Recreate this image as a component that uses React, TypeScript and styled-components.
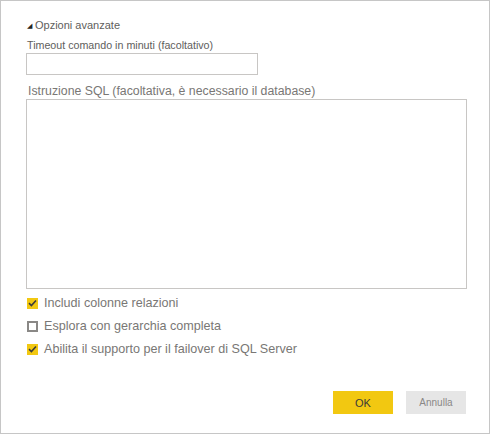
import styled, { createGlobalStyle } from 'styled-components';

const GlobalStyle = createGlobalStyle`
	html, body {
		margin: 0;
		padding: 0;
		background: #ffffff;
	}
	body {
		font-family: 'Liberation Sans', Arial, sans-serif;
	}
`;

type CheckOption = {
	label: string;
	checked: boolean;
};

const options: CheckOption[] = [
	{ label: 'Includi colonne relazioni', checked: true },
	{ label: 'Esplora con gerarchia completa', checked: false },
	{ label: 'Abilita il supporto per il failover di SQL Server', checked: true },
];

export default function App() {
	return (
		<>
			<GlobalStyle />
			<Dialog>
				<Section>
					<SectionHeader>
						<Caret>◢</Caret>
						Opzioni avanzate
					</SectionHeader>
					<FieldLabel>Timeout comando in minuti (facoltativo)</FieldLabel>
					<TextInput type='text' />
					<AreaLabel>
						Istruzione SQL (facoltativa, è necessario il database)
					</AreaLabel>
					<QueryArea />
				</Section>

				<CheckList>
					{options.map((option) => (
						<CheckRow key={option.label}>
							<Box $checked={option.checked}>
								{option.checked && (
									<svg width='9' height='8' viewBox='0 0 9 8'>
										<path
											d='M1 4.2 L3.4 6.5 L8 1.5'
											fill='none'
											stroke='#3b3a39'
											strokeWidth='1.6'
										/>
									</svg>
								)}
							</Box>
							{option.label}
						</CheckRow>
					))}
				</CheckList>

				<Footer>
					<Button $primary>OK</Button>
					<Button>Annulla</Button>
				</Footer>
			</Dialog>
		</>
	);
}

const Dialog = styled.div`
	box-sizing: border-box;
	width: 490px;
	height: 434px;
	border: 1px solid #c6c6c6;
	padding: 16px 23px 0 25px;
	display: flex;
	flex-direction: column;
`;

const Section = styled.div`
	display: flex;
	flex-direction: column;
`;

const SectionHeader = styled.div`
	display: flex;
	align-items: center;
	gap: 3px;
	height: 16px;
	font-size: 11px;
	color: #605e5c;
	padding-left: 1px;
`;

const Caret = styled.span`
	font-size: 7px;
	color: #252423;
	line-height: 1;
`;

const FieldLabel = styled.label`
	margin-top: 4px;
	height: 16px;
	line-height: 16px;
	font-size: 10.7px;
	color: #605e5c;
	padding-left: 1px;
`;

const TextInput = styled.input`
	box-sizing: border-box;
	width: 232px;
	height: 22px;
	border: 1px solid #c8c6c4;
	outline: none;
`;

const AreaLabel = styled.label`
	margin-top: 8px;
	height: 16px;
	line-height: 16px;
	font-size: 12.3px;
	color: #797775;
	padding-left: 2px;
`;

const QueryArea = styled.textarea`
	box-sizing: border-box;
	width: 441px;
	height: 190px;
	border: 1px solid #c8c6c4;
	resize: none;
	outline: none;
`;

const CheckList = styled.div`
	margin-top: 6px;
	display: flex;
	flex-direction: column;
	gap: 7px;
	padding-left: 1px;
`;

const CheckRow = styled.div`
	display: flex;
	align-items: center;
	gap: 6px;
	height: 16px;
	font-size: 12.6px;
	color: #797775;
`;

const Box = styled.span<{ $checked: boolean }>`
	box-sizing: border-box;
	width: 11px;
	height: 11px;
	display: flex;
	align-items: center;
	justify-content: center;
	background: ${(p) => (p.$checked ? '#f2c811' : '#ffffff')};
	border: ${(p) => (p.$checked ? 'none' : '2px solid #8a8886')};
`;

const Footer = styled.div`
	margin-top: 34px;
	display: flex;
	justify-content: flex-end;
	gap: 13px;
`;

const Button = styled.button<{ $primary?: boolean }>`
	width: 60px;
	height: 23px;
	border: none;
	padding: 0;
	font-family: 'Liberation Sans', Arial, sans-serif;
	font-size: ${(p) => (p.$primary ? '11px' : '10px')};
	background: ${(p) => (p.$primary ? '#f2c811' : '#e6e6e6')};
	color: ${(p) => (p.$primary ? '#3b3a39' : '#8a8886')};
`;
